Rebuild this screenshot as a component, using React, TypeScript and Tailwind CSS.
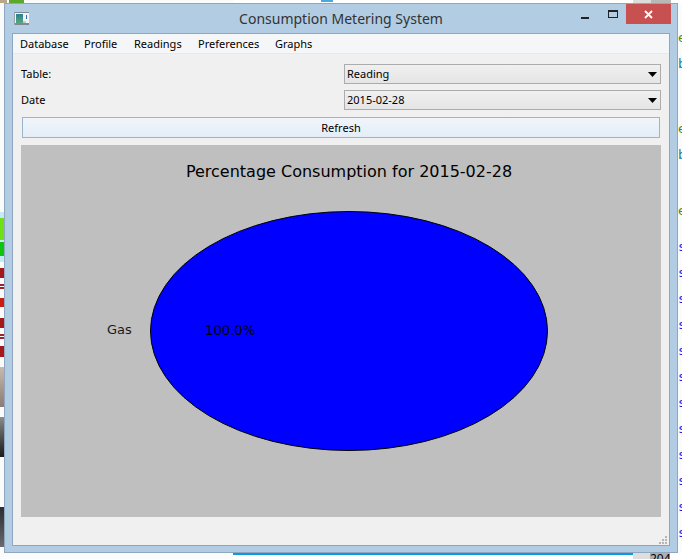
const font = "font-['Noto_Sans',sans-serif]";

function Combo({ value }: { value: string }) {
  return (
    <div className="ml-auto flex h-[20px] w-[317px] items-center justify-between border border-[#acacac] bg-gradient-to-b from-[#f0f0f0] to-[#e5e5e5] pl-[2px] pr-[3px]">
      <span className="text-[#000]">{value}</span>
      <svg width="9" height="5" viewBox="0 0 9 5">
        <path d="M0 0h9L4.5 5z" fill="#000" />
      </svg>
    </div>
  );
}

function WindowIcon() {
  return (
    <svg width="15" height="13" viewBox="0 0 15 13">
      <defs>
        <linearGradient id="icon-fill" x1="0" y1="0" x2="0" y2="1">
          <stop offset="0" stopColor="#2f7f95" />
          <stop offset="1" stopColor="#55a878" />
        </linearGradient>
      </defs>
      <rect width="15" height="13" fill="#f2f4f4" />
      <rect width="15" height="1" fill="#7d8a94" />
      <rect y="11" width="15" height="2" fill="#7d8a94" />
      <rect width="1" height="13" fill="#9aa6ae" />
      <rect x="2" y="2" width="7" height="9" fill="url(#icon-fill)" />
      <rect x="12" y="3" width="1" height="4" fill="#2f6fb5" />
      <rect x="9" y="9" width="3" height="2" fill="#c5ccd0" />
    </svg>
  );
}

function Chart() {
  return (
    <svg className="h-[372px] w-[640px] bg-[#bfbfbf]" viewBox="21 145 640 372">
      <text x="349" y="177" textAnchor="middle" fontSize="16" fontFamily="DejaVu Sans" fill="#000">
        Percentage Consumption for 2015-02-28
      </text>
      <ellipse cx="349" cy="331" rx="198.5" ry="119.5" fill="#0000ff" stroke="#000" strokeWidth="1" />
      <text x="107" y="334" fontSize="13" fontFamily="DejaVu Sans" fill="#1a1a1a">Gas</text>
      <text x="205" y="335" fontSize="13.2" fontFamily="DejaVu Sans" fill="#000">100.0%</text>
    </svg>
  );
}

function LeftStrip() {
  return (
    <div className="absolute left-0 top-[212px] flex w-[4px] flex-col">
      <div className="flex h-[50px] flex-col gap-[2px] bg-[#c4eaf2] pt-[6px]">
        <div className="h-[22px] bg-[#6fe018]" />
        <div className="h-[14px] bg-[#0fc40f]" />
      </div>
      <div className="mt-[6px] h-[10px] bg-[#a51818]" />
      <div className="mt-[6px] h-[5px] border-y-2 border-[#a02030]" />
      <div className="mt-[9px] h-[9px] bg-[#c82010]" />
      <div className="mt-[11px] h-[10px] bg-[#a51818]" />
      <div className="mt-[6px] h-[5px] border-y-2 border-[#a02030]" />
      <div className="mt-[7px] h-[11px] bg-[#a51818]" />
      <div className="mt-[10px] h-[40px] bg-gradient-to-b from-[#c9b8ac] to-[#8a7c74]" />
      <div className="mt-[10px] h-[40px] bg-gradient-to-b from-[#8c8c8c] to-[#1c1c1c]" />
      <div className="mt-[50px] h-[40px] bg-gradient-to-b from-[#2c2c34] to-[#6a6a70]" />
    </div>
  );
}

function RightStrip() {
  const green = "h-[20px] text-[#5a8a00]";
  const teal = "mt-[6px] h-[20px] text-[#2a7a7a]";
  const rows = Array.from({ length: 12 }, (_, i) => i);
  return (
    <div className="absolute left-[678px] top-[28px] flex flex-col text-[13px] leading-[20px] font-['DejaVu_Sans_Mono',monospace]">
      <span className={green}>e</span>
      <span className={teal}>b</span>
      <span className={`${green} mt-[45px]`}>e</span>
      <span className={teal}>b</span>
      <span className={`${green} mt-[36px]`}>e</span>
      <div className="mt-[16px] flex flex-col gap-[6px]">
        {rows.map((i) => (
          <span key={i} className="h-[20px] text-[#1a1aee]">s</span>
        ))}
      </div>
    </div>
  );
}

export default function App() {
  const menus = [
    ["Database", "w-[64px]"],
    ["Profile", "w-[50px]"],
    ["Readings", "w-[64px]"],
    ["Preferences", "w-[77px]"],
    ["Graphs", "w-[50px]"],
  ];

  return (
    <div className={`relative h-[559px] w-[682px] overflow-hidden bg-[#fafcfc] ${font} text-[11px]`}>
      {/* desktop behind the window */}
      <LeftStrip />
      <RightStrip />
      <div className="absolute left-[233px] top-0 flex h-[3px] w-[449px] bg-white">
        <div className="ml-[88px] h-[2px] w-[12px] bg-[#4aa8e0]" />
        <div className="ml-[300px] h-[3px] w-[18px] bg-[#dcdcdc]" />
        <div className="h-[3px] w-[20px] bg-[#b8b8b8]" />
      </div>
      <div className="absolute left-0 top-0 flex h-[3px] gap-[2px]">
        <div className="w-[7px] bg-[#b8a888]" />
        <div className="w-[15px] bg-[#5ca82c]" />
      </div>
      <div className="absolute left-[233px] top-[553px] flex h-[6px] w-[449px] items-start bg-white">
        <div className="h-[2px] w-[400px] bg-[#0a9adf]" />
        <div className="h-[6px] w-[17px] bg-[#dedede]" />
        <div className="h-[6px] w-[20px] bg-[#b0b0b0] text-[12px] leading-[12px] text-black">204</div>
      </div>

      {/* window frame */}
      <div className="absolute left-[4px] top-[3px] flex h-[550px] w-[674px] flex-col border border-[#8ea7bf] bg-[#b1cce3] px-[7px] pb-[6px]">
        <div className="relative flex h-[29px] shrink-0 items-center justify-center">
          <div className="absolute left-[2px] top-[8px] flex">
            <WindowIcon />
          </div>
          <span className="text-[14px] text-[#333]">Consumption Metering System</span>
          <div className="absolute right-[-1px] top-0 flex items-start">
            <svg className="mr-[19px] mt-[12px]" width="8" height="3" viewBox="0 0 8 3">
              <rect width="8" height="2" y="1" fill="#222" />
            </svg>
            <svg className="mr-[8px] mt-[6px]" width="10" height="8" viewBox="0 0 10 8">
              <rect x="0.5" y="1" width="9" height="6.5" fill="none" stroke="#222" />
              <rect width="10" height="2" fill="#222" />
            </svg>
            <div className="flex h-[20px] w-[45px] items-center justify-center bg-[#c75050]">
              <svg width="9" height="9" viewBox="0 0 9 9">
                <path d="M1 1l7 7M8 1L1 8" stroke="#fff" strokeWidth="1.8" />
              </svg>
            </div>
          </div>
        </div>

        <div className="flex min-h-0 flex-1 flex-col border border-[#8ea7bf] bg-[#f0f0f0] text-black">
          <div className="flex h-[20px] shrink-0 items-center border-b border-[#e8e9ea] bg-[#f5f6f7] pl-[7px] pt-px">
            {menus.map(([m, w]) => (
              <span key={m} className={w}>{m}</span>
            ))}
          </div>
          <div className="relative flex-1 px-[8px] pt-[10px]">
            <div className="flex h-[20px] items-center">
              <span>Table:</span>
              <Combo value="Reading" />
            </div>
            <div className="mt-[6px] flex h-[20px] items-center">
              <span>Date</span>
              <Combo value="2015-02-28" />
            </div>
            <div className="mx-px mt-[7px] flex h-[21px] items-center justify-center border border-[#97b4d3] bg-gradient-to-b from-[#f1f5fa] to-[#e4edf7] pt-px">
              Refresh
            </div>
            <div className="mt-[7px] flex">
              <Chart />
            </div>
            <svg className="absolute bottom-0 right-[1px]" width="9" height="9" viewBox="0 0 9 9" fill="#b5b5b5">
              <rect x="6" y="0" width="2" height="2" />
              <rect x="3" y="3" width="2" height="2" />
              <rect x="6" y="3" width="2" height="2" />
              <rect x="0" y="6" width="2" height="2" />
              <rect x="3" y="6" width="2" height="2" />
              <rect x="6" y="6" width="2" height="2" />
            </svg>
          </div>
        </div>
      </div>
    </div>
  );
}
